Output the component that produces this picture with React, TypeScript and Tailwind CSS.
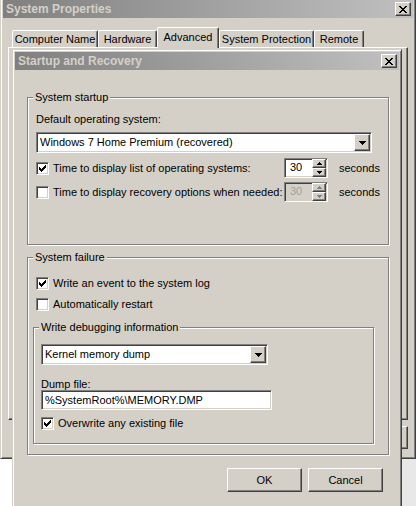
import type { ReactNode } from "react";

const raised =
  "border border-t-white border-l-white border-r-[#404040] border-b-[#404040] shadow-[inset_-1px_-1px_0_#808080]";
const windowEdge =
  "border border-t-[#d4d0c8] border-l-[#d4d0c8] border-r-[#404040] border-b-[#404040] shadow-[inset_1px_1px_0_#fff,inset_-1px_-1px_0_#808080]";
const sunken =
  "border border-t-[#808080] border-l-[#808080] border-r-white border-b-white shadow-[inset_1px_1px_0_#404040,inset_-1px_-1px_0_#d4d0c8]";

function Pixels({ w, h, rects, color = "#000" }: { w: number; h: number; rects: number[][]; color?: string }) {
  return (
    <svg width={w} height={h} viewBox={`0 0 ${w} ${h}`} shapeRendering="crispEdges">
      {rects.map(([x, y, rw, rh = 1], i) => (
        <rect key={i} x={x} y={y} width={rw} height={rh} fill={color} />
      ))}
    </svg>
  );
}

const closeGlyph = [
  [0, 0, 2], [6, 0, 2], [1, 1, 2], [5, 1, 2], [2, 2, 4], [3, 3, 2],
  [2, 4, 4], [1, 5, 2], [5, 5, 2], [0, 6, 2], [6, 6, 2],
];
const checkGlyph = [
  [6, 0, 1], [5, 1, 2], [0, 2, 1], [4, 2, 3], [0, 3, 2], [3, 3, 3],
  [0, 4, 5], [1, 5, 3], [2, 6, 1],
];

function TitleBar({ title }: { title: string }) {
  return (
    <div className="flex h-[18px] items-center justify-between bg-[linear-gradient(to_right,#808080,#c0c0c0)]">
      <span className="pl-[3px] text-[12px] leading-[14px] font-bold text-[#d4d0c8]">{title}</span>
      <div className={`mr-[2px] flex h-[14px] w-[16px] items-center justify-center bg-[#d4d0c8] ${raised}`}>
        <Pixels w={8} h={7} rects={closeGlyph} />
      </div>
    </div>
  );
}

function Checkbox({ checked }: { checked?: boolean }) {
  return (
    <div className={`flex h-[13px] w-[13px] shrink-0 items-center justify-center bg-white ${sunken}`}>
      {checked ? <Pixels w={7} h={7} rects={checkGlyph} /> : null}
    </div>
  );
}

function CheckRow({ checked, children, className = "" }: { checked?: boolean; children: ReactNode; className?: string }) {
  return (
    <div className={`flex h-[13px] items-center gap-[4px] ${className}`}>
      <Checkbox checked={checked} />
      <span className="leading-[13px] whitespace-nowrap">{children}</span>
    </div>
  );
}

function Combo({ value, width, className = "" }: { value: string; width: string; className?: string }) {
  return (
    <div className={`flex h-[21px] items-center bg-white ${sunken} ${width} ${className}`}>
      <span className="flex-1 pl-[3px] leading-[13px] whitespace-nowrap">{value}</span>
      <div className={`mr-px flex h-[17px] w-[16px] items-center justify-center bg-[#d4d0c8] ${raised}`}>
        <Pixels w={7} h={4} rects={[[0, 0, 7], [1, 1, 5], [2, 2, 3], [3, 3, 1]]} />
      </div>
    </div>
  );
}

function Spin({ disabled }: { disabled?: boolean }) {
  const arrow = disabled ? "#808080" : "#000";
  return (
    <div className={`flex h-[20px] w-[44px] items-stretch ${sunken} ${disabled ? "bg-[#d4d0c8] text-[#a0a0a0]" : "bg-white"}`}>
      <span className="flex-1 pl-[5px] leading-[16px]">30</span>
      <div className="mr-px flex w-[14px] flex-col">
        <div className={`flex flex-1 items-center justify-center bg-[#d4d0c8] ${raised}`}>
          <Pixels w={5} h={3} rects={[[2, 0, 1], [1, 1, 3], [0, 2, 5]]} color={arrow} />
        </div>
        <div className={`flex flex-1 items-center justify-center bg-[#d4d0c8] ${raised}`}>
          <Pixels w={5} h={3} rects={[[0, 0, 5], [1, 1, 3], [2, 2, 1]]} color={arrow} />
        </div>
      </div>
    </div>
  );
}

function TimeRow({ checked, label, disabled }: { checked?: boolean; label: string; disabled?: boolean }) {
  return (
    <div className="flex h-[20px] items-center">
      <div className="flex w-[248px] items-center gap-[4px]">
        <Checkbox checked={checked} />
        <span className="leading-[13px] whitespace-nowrap">{label}</span>
      </div>
      <Spin disabled={disabled} />
      <span className="ml-[11px] leading-[13px]">seconds</span>
    </div>
  );
}

function Group({ label, className = "", children }: { label: string; className?: string; children: ReactNode }) {
  return (
    <div className={`relative border border-[#808080] shadow-[inset_1px_1px_0_#fff,1px_1px_0_#fff] ${className}`}>
      <span className="absolute -top-[7px] left-[5px] bg-[#d4d0c8] px-[2px] leading-[13px] whitespace-nowrap">
        {label}
      </span>
      {children}
    </div>
  );
}

function Button({ children, className = "" }: { children?: ReactNode; className?: string }) {
  return (
    <div className={`flex w-[75px] items-center justify-center bg-[#d4d0c8] leading-[13px] ${raised} ${className}`}>
      {children}
    </div>
  );
}

const tabs = [
  { name: "Computer Name", w: "w-[86px]" },
  { name: "Hardware", w: "w-[59px]" },
  { name: "Advanced", w: "w-[62px]", active: true },
  { name: "System Protection", w: "w-[95px]" },
  { name: "Remote", w: "w-[50px]" },
];

export default function App() {
  return (
    <div className="relative h-[506px] w-[416px] overflow-hidden bg-[linear-gradient(to_right,#ffffff_200px,#e8e8e8_200px)] font-['Liberation_Sans',Arial,sans-serif] text-[11px] text-black">
      {/* System Properties, behind */}
      <div className={`absolute -top-[3px] left-0 h-[462px] w-[416px] bg-[#d4d0c8] p-[2px] ${windowEdge}`}>
        <TitleBar title="System Properties" />
        <div className="mt-[9px] flex h-[20px] items-end pl-[9px]">
          {tabs.map((t) =>
            t.active ? (
              <div
                key={t.name}
                className={`relative z-10 -mb-px flex h-[21px] items-start justify-center rounded-t-[2px] border border-b-0 border-t-white border-l-white border-r-[#404040] bg-[#d4d0c8] pt-[3px] leading-[13px] shadow-[inset_-1px_0_0_#808080] ${t.w}`}
              >
                {t.name}
              </div>
            ) : (
              <div
                key={t.name}
                className={`flex h-[17px] items-start justify-center rounded-t-[2px] border border-b-0 border-t-white border-l-white border-r-[#404040] pt-[2px] leading-[13px] shadow-[inset_-1px_0_0_#808080] ${t.w}`}
              >
                {t.name}
              </div>
            ),
          )}
        </div>
        <div className={`ml-[5px] h-[373px] w-[400px] bg-[#d4d0c8] ${raised}`} />
        <div className="mt-[6px] flex justify-end gap-[6px] pr-[5px]">
          <Button className="h-[23px]">OK</Button>
          <Button className="h-[23px]">Cancel</Button>
          <Button className="h-[23px]">Apply</Button>
        </div>
      </div>

      {/* Startup and Recovery dialog */}
      <div className={`absolute top-[49px] left-[12px] h-[460px] w-[390px] bg-[#d4d0c8] p-[2px] ${windowEdge}`}>
        <TitleBar title="Startup and Recovery" />
        <div className="pt-[27px] pr-[10px] pl-[12px]">
          <Group label="System startup" className="h-[148px]">
            <div className="pt-[15px] pl-[8px]">
              <div className="leading-[13px]">Default operating system:</div>
              <Combo value="Windows 7 Home Premium (recovered)" width="w-[336px]" className="mt-[6px]" />
              <div className="mt-[5px]">
                <TimeRow checked label="Time to display list of operating systems:" />
              </div>
              <div className="mt-[4px]">
                <TimeRow label="Time to display recovery options when needed:" disabled />
              </div>
            </div>
          </Group>

          <Group label="System failure" className="mt-[12px] h-[198px]">
            <div className="pt-[19px]">
              <CheckRow checked className="ml-[8px]">
                Write an event to the system log
              </CheckRow>
              <CheckRow className="mt-[8px] ml-[8px]">Automatically restart</CheckRow>
              <Group label="Write debugging information" className="mt-[16px] ml-[5px] h-[117px] w-[341px]">
                <div className="pt-[16px] pl-[7px]">
                  <Combo value="Kernel memory dump" width="w-[227px]" />
                  <div className="mt-[13px] leading-[12px]">Dump file:</div>
                  <div className={`flex h-[20px] w-[231px] items-center bg-white pl-[3px] leading-[13px] ${sunken}`}>
                    %SystemRoot%\MEMORY.DMP
                  </div>
                  <CheckRow checked className="mt-[7px]">
                    Overwrite any existing file
                  </CheckRow>
                </div>
              </Group>
            </div>
          </Group>

          <div className="mt-[13px] flex justify-end gap-[6px] pr-[6px]">
            <Button className="h-[24px]">OK</Button>
            <Button className="h-[24px]">Cancel</Button>
          </div>
        </div>
      </div>
    </div>
  );
}
